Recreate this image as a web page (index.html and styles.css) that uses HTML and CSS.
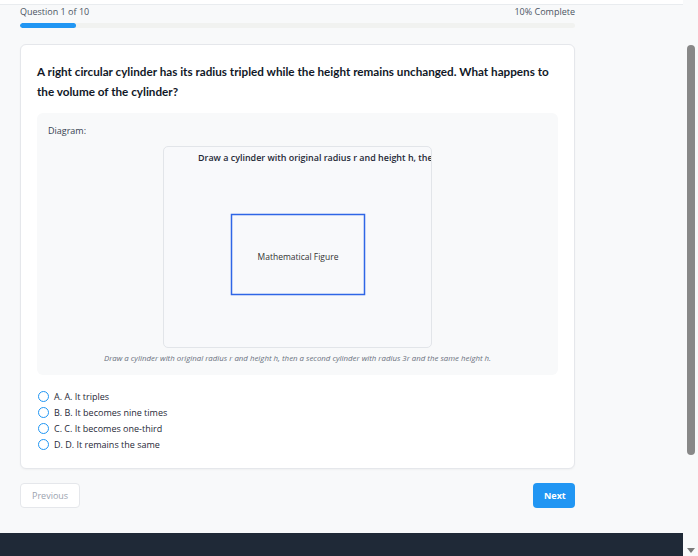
FILE: index.html
```html
<!DOCTYPE html>
<html lang="en">
<head>
<meta charset="utf-8">
<title>Quiz</title>
<link rel="stylesheet" href="styles.css">
</head>
<body>
<div class="page">
  <header class="topbar"></header>
  <main class="quiz">
    <div class="progress-info">
      <span>Question 1 of 10</span>
      <span>10% Complete</span>
    </div>
    <div class="progress-track"><div class="progress-fill" style="width:10%"></div></div>

    <section class="card">
      <h2 class="question">A right circular cylinder has its radius tripled while the height remains unchanged. What happens to the volume of the cylinder?</h2>
      <div class="diagram">
        <div class="diagram-label">Diagram:</div>
        <div class="figure">
          <svg class="figure-svg" width="267" height="200" viewBox="0 0 267 200">
            <text x="34" y="14" class="fig-title">Draw a cylinder with original radius r and height h, then a second cylinder with radius 3r and the same height h.</text>
            <rect x="67.5" y="67.5" width="133" height="80" class="fig-rect"/>
            <text x="134" y="113" class="fig-text" text-anchor="middle">Mathematical Figure</text>
          </svg>
        </div>
        <p class="caption">Draw a cylinder with original radius r and height h, then a second cylinder with radius 3r and the same height h.</p>
      </div>
      <ul class="options">
        <li><span class="radio"></span>A. A. It triples</li>
        <li><span class="radio"></span>B. B. It becomes nine times</li>
        <li><span class="radio"></span>C. C. It becomes one-third</li>
        <li><span class="radio"></span>D. D. It remains the same</li>
      </ul>
    </section>

    <div class="nav">
      <button class="btn btn-prev" disabled>Previous</button>
      <button class="btn btn-next">Next</button>
    </div>
  </main>
  <footer class="footer"></footer>
</div>
<div class="scrollbar" aria-hidden="true">
  <div class="scroll-thumb"></div>
  <div class="scroll-arrow"></div>
</div>
</body>
</html>
```
FILE: styles.css
```css
html, body {
  height: 100%;
}
body {
  margin: 0;
  display: flex;
  overflow: hidden;
  background: #f8f9fa;
  font-family: "Open Sans", "Noto Sans", sans-serif;
  color: #1f2937;
}
.page {
  flex: 1;
  display: flex;
  flex-direction: column;
  min-width: 0;
}
.topbar {
  height: 4px;
  background: #ffffff;
  border-bottom: 1px solid #e9ecef;
  flex: none;
}
.quiz {
  width: 555px;
  padding: 0 0 0 20px;
  flex: none;
}
.progress-info {
  display: flex;
  justify-content: space-between;
  font-size: 9px;
  line-height: 14px;
  color: #4b5563;
}
.progress-track {
  margin-top: 4px;
  height: 5px;
  background: #f1f2f0;
  border-radius: 3px;
  overflow: hidden;
}
.progress-fill {
  height: 100%;
  background: #2196f3;
  border-radius: 3px;
}
.card {
  margin-top: 16px;
  background: #ffffff;
  border: 1px solid #e5e7eb;
  border-radius: 6px;
  padding: 16px;
  box-shadow: 0 1px 2px rgba(0,0,0,0.04);
}
.question {
  margin: 0;
  font-family: Lato, "Open Sans", sans-serif;
  font-size: 11.7px;
  line-height: 20px;
  font-weight: 700;
  color: #111827;
}
.diagram {
  margin-top: 12px;
  background: #f8f9fa;
  border-radius: 6px;
  padding: 12px 11px 11px;
}
.diagram-label {
  font-size: 9px;
  line-height: 12px;
  color: #374151;
}
.figure {
  margin: 9px auto 0;
  width: 267px;
  height: 200px;
  border: 1px solid #e2e5e9;
  border-radius: 5px;
  background: #f8f9fb;
  overflow: hidden;
}
.figure-svg {
  display: block;
}
.fig-title {
  font-family: "Open Sans", "Noto Sans", sans-serif;
  font-size: 8.95px;
  font-weight: 600;
  fill: #1f2937;
}
.fig-rect {
  fill: none;
  stroke: #2f66e6;
  stroke-width: 1.5;
}
.fig-text {
  font-family: "Open Sans", "Noto Sans", sans-serif;
  font-size: 8.5px;
  fill: #333333;
}
.caption {
  margin: 4px 0 0;
  text-align: center;
  font-size: 7.85px;
  line-height: 12px;
  font-style: italic;
  color: #6b7280;
}
.options {
  list-style: none;
  margin: 13px 0 0;
  padding: 0;
}
.options li {
  display: flex;
  align-items: center;
  height: 16px;
  font-size: 9px;
  color: #1f2937;
}
.radio {
  box-sizing: border-box;
  width: 11px;
  height: 11px;
  border: 1.5px solid #2196f3;
  border-radius: 50%;
  margin: 0 5px 0 1px;
  background: #ffffff;
}
.nav {
  margin-top: 14px;
  display: flex;
  justify-content: space-between;
  padding-bottom: 25px;
}
.btn {
  height: 25px;
  border-radius: 4px;
  font-family: "Open Sans", "Noto Sans", sans-serif;
  font-size: 9px;
  padding: 0 11px;
  cursor: pointer;
}
.btn-prev {
  width: 60px;
  background: #ffffff;
  border: 1px solid #e5e7eb;
  color: #9ca3af;
}
.btn-next {
  width: 42px;
  background: #2196f3;
  border: none;
  color: #ffffff;
  font-weight: 700;
}
.footer {
  flex: 1;
  background: #1f2937;
}
.scrollbar {
  width: 15px;
  flex: none;
  display: flex;
  flex-direction: column;
  align-items: center;
  background: #f8f9fa;
}
.scroll-thumb {
  margin-top: 45px;
  width: 8px;
  height: 410px;
  border-radius: 4px;
  background: #888888;
}
.scroll-arrow {
  margin-top: auto;
  margin-bottom: 3px;
  width: 0;
  height: 0;
  border-left: 4px solid transparent;
  border-right: 4px solid transparent;
  border-top: 5px solid #7a7a7a;
}
```
